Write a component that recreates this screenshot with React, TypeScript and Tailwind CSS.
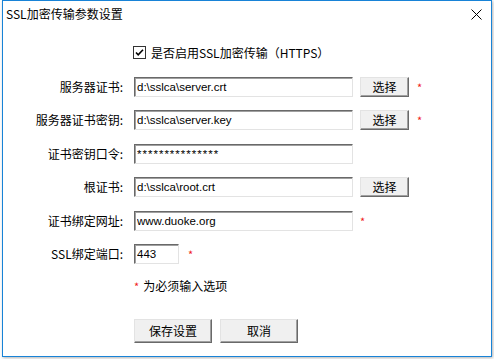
import React from 'react';

const cjk = '"Noto Sans CJK SC", "Liberation Sans", sans-serif';

function Field({ value, width = 'w-[219px]', secret = false }: { value: string; width?: string; secret?: boolean }) {
  return (
    <input
      readOnly
      defaultValue={value}
      className={`${width} h-[20px] px-[2px] text-[11.5px] text-black bg-white outline-none border border-t-[#696969] border-l-[#696969] border-r-[#e3e3e3] border-b-[#e3e3e3] shadow-[inset_1px_1px_0_#a0a0a0] ${secret ? 'tracking-[1px] text-[#1a2a5a]' : ''}`}
      style={{ fontFamily: '"Liberation Sans", Arial, sans-serif' }}
    />
  );
}

function Btn({ label, className = '' }: { label: string; className?: string }) {
  return (
    <button
      className={`flex items-center justify-center bg-[#f0f0f0] text-[12px] text-black border border-t-[#e3e3e3] border-l-[#e3e3e3] border-r-[#696969] border-b-[#696969] shadow-[inset_-1px_-1px_0_#a0a0a0] ${className}`}
    >
      {label}
    </button>
  );
}

function Star({ className = '' }: { className?: string }) {
  return <span className={`text-[11px] leading-none text-[#f02020] ${className}`}>*</span>;
}

function Row({
  label,
  children,
  className = '',
}: {
  label: string;
  children: React.ReactNode;
  className?: string;
}) {
  return (
    <div className={`flex items-center h-[20px] ${className}`}>
      <div className="w-[120px] text-right text-[12px] leading-none text-black">{label}</div>
      <div className="flex items-center ml-[11px]">{children}</div>
    </div>
  );
}

export default function App() {
  return (
    <div className="w-[494px] h-[359px] bg-white overflow-hidden" style={{ fontFamily: cjk }}>
      <div className="ml-[2px] w-[490px] h-[357px] bg-white border border-[#1883d7] shadow-[1px_1px_3px_rgba(0,0,0,0.3)] flex flex-col">
        {/* title bar */}
        <div className="h-[26px] flex items-center justify-between pl-[3px] pr-[9px]">
          <span className="text-[12px] text-black">SSL加密传输参数设置</span>
          <svg width="11" height="11" viewBox="0 0 11 11" aria-hidden="true">
            <path d="M0.5 0.5L10.5 10.5M10.5 0.5L0.5 10.5" stroke="#000" strokeWidth="1" />
          </svg>
        </div>

        {/* checkbox */}
        <div className="flex items-center mt-[19px] h-[13px] ml-[130px]">
          <svg width="13" height="13" viewBox="0 0 13 13" aria-hidden="true">
            <rect x="0.5" y="0.5" width="12" height="12" fill="#fff" stroke="#333" />
            <path d="M3 6.5L5.2 8.8L10 3.8" fill="none" stroke="#000" strokeWidth="1.6" />
          </svg>
          <span className="ml-[5px] text-[12px] leading-none text-black">是否启用SSL加密传输（HTTPS）</span>
        </div>

        <div className="flex flex-col">
          <Row label="服务器证书:" className="mt-[18px]">
            <Field value="d:\sslca\server.crt" />
            <Btn label="选择" className="ml-[7px] w-[49px] h-[20px]" />
            <Star className="ml-[8px]" />
          </Row>
          <Row label="服务器证书密钥:" className="mt-[13px]">
            <Field value="d:\sslca\server.key" />
            <Btn label="选择" className="ml-[7px] w-[49px] h-[20px]" />
            <Star className="ml-[8px]" />
          </Row>
          <Row label="证书密钥口令:" className="mt-[14px]">
            <Field value="***************" secret />
          </Row>
          <Row label="根证书:" className="mt-[13px]">
            <Field value="d:\sslca\root.crt" />
            <Btn label="选择" className="ml-[7px] w-[49px] h-[20px]" />
          </Row>
          <Row label="证书绑定网址:" className="mt-[14px]">
            <Field value="www.duoke.org" />
            <Star className="ml-[7px]" />
          </Row>
          <Row label="SSL绑定端口:" className="mt-[13px]">
            <Field value="443" width="w-[45px]" />
            <Star className="ml-[9px]" />
          </Row>
        </div>

        <div className="flex items-center mt-[15px] ml-[131px] h-[14px]">
          <Star />
          <span className="ml-[4px] text-[12px] leading-none text-black">为必须输入选项</span>
        </div>

        <div className="flex mt-[26px] ml-[131px] gap-[8px]">
          <Btn label="保存设置" className="w-[78px] h-[24px]" />
          <Btn label="取消" className="w-[78px] h-[24px]" />
        </div>
      </div>
    </div>
  );
}
